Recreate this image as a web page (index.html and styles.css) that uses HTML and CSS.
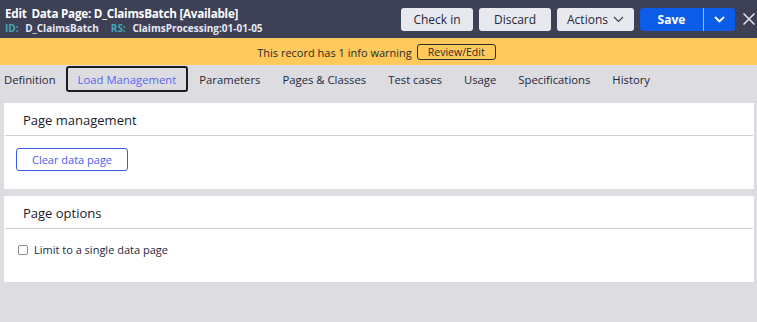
FILE: index.html
```html
<!DOCTYPE html>
<html>
<head>
<meta charset="utf-8">
<link rel="stylesheet" href="styles.css">
</head>
<body>
<header class="topbar">
  <div class="titles">
    <div class="title"><span class="mode">Edit</span> Data Page: D_ClaimsBatch [Available]</div>
    <div class="meta"><span class="lbl">ID:</span> <span class="val">D_ClaimsBatch</span><span class="lbl rs">RS:</span> <span class="val">ClaimsProcessing:01-01-05</span></div>
  </div>
  <div class="actions">
    <button class="btn btn-light checkin">Check in</button>
    <button class="btn btn-light discard">Discard</button>
    <button class="btn btn-light actions-btn">Actions
      <svg class="chev" width="11" height="7" viewBox="0 0 11 7"><path d="M1 1l4.5 4.5L10 1" fill="none" stroke="#3c3f55" stroke-width="1.2"/></svg>
    </button>
    <div class="save-group">
      <button class="btn save">Save</button>
      <button class="btn save-drop">
        <svg width="11" height="7" viewBox="0 0 11 7"><path d="M1 1l4.5 4.5L10 1" fill="none" stroke="#fff" stroke-width="1.8"/></svg>
      </button>
    </div>
    <button class="close" aria-label="Close">
      <svg width="12" height="12" viewBox="0 0 12 12"><path d="M0.5 0.5l11 11M11.5 0.5l-11 11" stroke="#e6e7ee" stroke-width="1.5"/></svg>
    </button>
  </div>
</header>
<div class="banner">
  <span>This record has 1 info warning</span>
  <button class="review">Review/Edit</button>
</div>
<nav class="tabs">
  <span class="tab">Definition</span>
  <span class="tab active">Load Management</span>
  <span class="tab">Parameters</span>
  <span class="tab">Pages &amp; Classes</span>
  <span class="tab">Test cases</span>
  <span class="tab">Usage</span>
  <span class="tab">Specifications</span>
  <span class="tab">History</span>
</nav>
<main class="content">
  <section class="card">
    <h2 class="card-head">Page management</h2>
    <div class="card-body">
      <button class="outline-btn">Clear data page</button>
    </div>
  </section>
  <section class="card">
    <h2 class="card-head">Page options</h2>
    <div class="card-body opts">
      <label class="check"><span class="box"></span>Limit to a single data page</label>
    </div>
  </section>
</main>
</body>
</html>
```
FILE: styles.css
```css
* { box-sizing: border-box; }
html, body { margin: 0; height: 100%; }
body {
  background: #dcdce1;
  font-family: "Open Sans", "Noto Sans", sans-serif;
  color: #1c1d30;
  overflow: hidden;
}
button { font-family: inherit; cursor: pointer; }

.topbar {
  height: 38px;
  background: #3e4056;
  display: flex;
  align-items: center;
  justify-content: space-between;
  padding: 0 2px 0 5px;
}
.titles { display: flex; flex-direction: column; gap: 1px; margin-top: 1px; }
.title {
  color: #fff;
  font-weight: 700;
  font-size: 11.7px;
  line-height: 16px;
  letter-spacing: -0.25px;
}
.mode { margin-right: 2px; }
.meta {
  font-size: 10px;
  font-weight: 700;
  line-height: 13px;
  color: #e8e9f3;
}
.meta .lbl { color: #45a8b7; }
.meta .rs { margin-left: 12px; }
.meta .val { margin-left: 4px; }

.actions { display: flex; align-items: center; }
.btn {
  height: 23px;
  border: none;
  border-radius: 3px;
  font-size: 12px;
  padding: 0;
}
.btn-light { background: #e8e9ee; color: #25273a; margin-right: 6px; }
.checkin { width: 72px; }
.discard { width: 72px; }
.actions-btn { width: 77px; display: flex; align-items: center; justify-content: center; gap: 5px; }
.chev { margin-top: 1px; }
.save-group { display: flex; }
.save {
  width: 64px;
  background: #0b5ce6;
  color: #fff;
  font-weight: 700;
  border-radius: 3px 0 0 3px;
  border-right: 1px solid #c5b79a;
}
.save-drop {
  width: 31px;
  background: #0b5ce6;
  border-radius: 0 3px 3px 0;
  display: flex;
  align-items: center;
  justify-content: center;
}
.close {
  background: none;
  border: none;
  padding: 0;
  width: 12px;
  height: 12px;
  margin-left: 8px;
  display: flex;
  align-items: center;
  justify-content: center;
}

.banner {
  height: 27px;
  background: #ffc95c;
  display: flex;
  align-items: center;
  justify-content: center;
  gap: 5px;
  font-size: 11px;
  color: #2b2a26;
  padding-right: 4px;
}
.banner span { margin-top: 1px; }
.review {
  height: 16px;
  width: 79px;
  border: 1px solid #2b2a26;
  border-radius: 3px;
  background: transparent;
  font-size: 10.5px;
  color: #2b2a26;
  padding: 0;
  line-height: 14px;
}

.tabs {
  display: flex;
  align-items: center;
  height: 38px;
  padding: 1px 0 11px;
  font-size: 11.3px;
  color: #25273a;
}
.tab {
  height: 26px;
  display: flex;
  align-items: center;
  padding: 0 11px;
  white-space: nowrap;
}
.tab:first-child { padding-left: 4px; padding-right: 10px; }
.tab.active {
  border: 2px solid #1c1d24;
  border-radius: 3px;
  padding: 0 10px;
  color: #5865f2;
}

.content {
  display: flex;
  flex-direction: column;
  gap: 7px;
  padding: 0 3px 0 4px;
}
.card { background: #fff; height: 86px; display: flex; flex-direction: column; }
.card-head {
  margin: 0;
  height: 33px;
  border-bottom: 1px solid #cfd0d8;
  font-size: 13px;
  font-weight: 400;
  display: flex;
  align-items: center;
  padding-left: 18px;
  padding-top: 1px;
  color: #1a1b2e;
  margin-left: 1px;
  margin-right: 1px;
}
.card-body { padding: 11px 12px; }
.outline-btn {
  height: 23px;
  width: 112px;
  border: 1px solid #3c5ce6;
  border-radius: 3px;
  background: #fff;
  color: #4a5ef0;
  font-size: 11px;
  padding: 0;
}
.opts { padding: 13px 14px; }
.check {
  display: flex;
  align-items: center;
  gap: 6px;
  font-size: 11px;
  color: #25273a;
}
.box {
  width: 10px;
  height: 10px;
  border: 1px solid #8d8e99;
  border-radius: 2px;
  display: inline-block;
}
```
